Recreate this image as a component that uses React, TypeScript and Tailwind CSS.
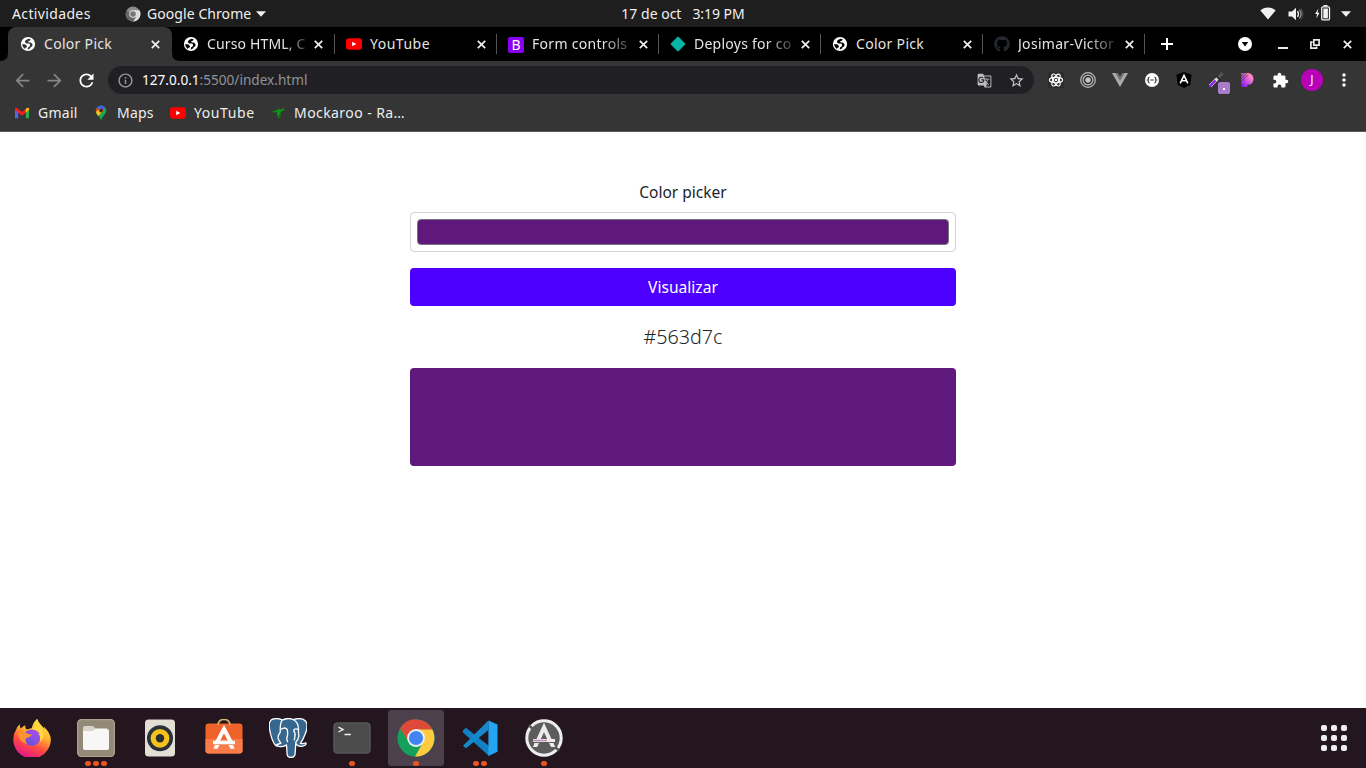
import React from "react";
import { FaGithub } from "react-icons/fa";
import { MdExtension, MdGTranslate, MdStarBorder, MdInfoOutline, MdArrowBack, MdArrowForward, MdRefresh, MdMoreVert } from "react-icons/md";

type Box = { children: React.ReactNode; className?: string };

const GlobeIcon = ({ land = "fill-black" }: { land?: string }) => (
  <svg viewBox="0 0 16 16" className="size-4 shrink-0">
    <circle cx="8" cy="8" r="7.1" fill="#fff" />
    <path d="M8.4 2.7 5.6 4.3 4.8 6.2 6.4 7.6H9.2L10.2 8.8 9.6 10.4 8.2 11.2 7.6 13.4 9.4 13.1 10.4 11.6 12.2 10.2 12.6 8.4 11.2 6.8 8.4 6.2 8.2 5.2 10.2 4.6 10.6 3.2z" className={land} />
    <path d="M2.3 8 5.6 8.6 7 10.2 6.6 11.6 5.4 11.8 5 13 3.4 11.6 2.4 9.8z" className={land} />
  </svg>
);
const YouTubeIcon = () => (
  <svg viewBox="0 0 16 16" className="size-4 shrink-0">
    <rect x="0" y="2.2" width="16" height="11.6" rx="3" fill="#f00" />
    <path d="M6.2 5.7v4.6L10.3 8z" fill="#fff" />
  </svg>
);
const BootstrapIcon = () => (
  <span className="mt-px flex size-4 shrink-0 items-center justify-center rounded-xs bg-[#8a00f5] text-[14px] leading-4 text-white">B</span>
);
const DiamondIcon = () => (
  <svg viewBox="0 0 16 16" className="size-4 shrink-0"><path d="M8 .2 15.6 8 8 15.8.4 8z" fill="#05b5a5" /></svg>
);
const CloseIcon = ({ className = "size-[9px]" }: { className?: string }) => (
  <svg viewBox="0 0 9 9" className={className}><path d="M.8.8 8.2 8.2M8.2.8.8 8.2" stroke="#f1f1f1" strokeWidth="1.7" /></svg>
);

type TabInfo = { icon: React.ReactNode; title: string; box: string; text: string };
const tabs: TabInfo[] = [
  { icon: <GlobeIcon />, title: "Curso HTML, C", box: "w-[163px] -ml-px border-transparent", text: "tracking-[0.15px] [mask-image:linear-gradient(to_right,black_78%,transparent_108%)]" },
  { icon: <YouTubeIcon />, title: "YouTube", box: "w-[162px] border-[#555]", text: "tracking-[0.5px]" },
  { icon: <BootstrapIcon />, title: "Form controls", box: "w-[162px] border-[#555]", text: "tracking-[0.3px] [mask-image:linear-gradient(to_right,black_72%,transparent_108%)]" },
  { icon: <DiamondIcon />, title: "Deploys for co", box: "w-[162px] border-[#555]", text: "tracking-[0.25px] [mask-image:linear-gradient(to_right,black_74%,transparent_108%)]" },
  { icon: <GlobeIcon />, title: "Color Pick", box: "w-[162px] border-[#555]", text: "tracking-[0.3px]" },
  { icon: <FaGithub className="size-4 shrink-0 text-[#24292f]" />, title: "Josimar-Victor", box: "w-[163px] border-x border-[#555]", text: "tracking-[0.3px] [mask-image:linear-gradient(to_right,black_70%,transparent_106%)]" },
];

function Tab({ icon, title, box, text }: TabInfo) {
  return (
    <div className={`flex h-5 shrink-0 items-center border-l pl-[11px] ${box}`}>
      {icon}
      <span className={`mb-0.5 ml-2 w-[98px] shrink-0 whitespace-nowrap ${text}`}>{title}</span>
      <CloseIcon className="ml-[9px] size-[9px] shrink-0" />
    </div>
  );
}

function SystemBar() {
  return (
    <header className="grid h-[27px] grid-cols-[1fr_auto_1fr] items-center bg-[#1e1e1e] text-[14px] text-[#f0f0f0]">
      <div className="flex items-center pl-3">
        <span className="w-[114px] tracking-[0.36px]">Actividades</span>
        <svg viewBox="0 0 16 16" className="-ml-px mr-1.5 size-4">
          <circle cx="8" cy="8" r="7.4" fill="#8c8c8c" />
          <path d="M8 4.3h6.5A7.4 7.4 0 0 1 8 15.4l3.2-5.6z" fill="#ddd" />
          <path d="M1.6 4.3A7.4 7.4 0 0 0 8 15.4l2.8-4z" fill="#666" />
          <circle cx="8" cy="8" r="3.8" fill="#ddd" /><circle cx="8" cy="8" r="2.8" fill="#777" />
        </svg>
        <span className="w-[109px] whitespace-nowrap tracking-[0.07px]">Google Chrome</span>
        <svg viewBox="0 0 10 6" className="h-1.5 w-2.5"><path d="M0 .3h10L5 5.7z" fill="#f0f0f0" /></svg>
      </div>
      <div className="flex gap-[11px] whitespace-pre text-[14px]"><span>17 de oct</span><span className="-tracking-[0.05px]">3:19 PM</span></div>
      <div className="flex items-center justify-end pr-[15px]">
        <svg viewBox="0 0 16 13" className="mr-3 h-[13px] w-4"><path d="M.4 3.4C4-.5 12-.5 15.6 3.4L8 12.6z" fill="#f1f1f1" /></svg>
        <svg viewBox="0 0 16 14" className="mr-[11px] h-3.5 w-4" fill="none">
          <path d="M.5 4.5H4L8 .8v12.4L4 9.5H.5z" fill="#f1f1f1" />
          <path d="M9.5 4.2q2 2.8 0 5.6" stroke="#f1f1f1" strokeWidth="1.3" /><path d="M11.4 2.7q3.4 4.3 0 8.6" stroke="#999" strokeWidth="1.3" /><path d="M13 1.5q4 5.5 0 11" stroke="#555" />
        </svg>
        <svg viewBox="0 0 16 16" className="mb-px mr-2.5 size-4">
          <path d="M3.5 3.5 0 9h2l-.6 4.5L4.5 7.8h-2z" fill="#f1f1f1" />
          <path d="M8.5 0h4v1.5h-4z" fill="#f1f1f1" /><rect x="6.7" y="1.9" width="7.8" height="13" rx="1.2" fill="none" stroke="#f1f1f1" strokeWidth="1.3" /><path d="M8.3 3.5h4.6v9.8H8.3z" fill="#f1f1f1" />
        </svg>
        <svg viewBox="0 0 10 6" className="h-1.5 w-2.5"><path d="M0 .3h10L5 5.7z" fill="#f0f0f0" /></svg>
      </div>
    </header>
  );
}

function TabStrip() {
  return (
    <div className="flex h-[34px] items-center bg-black text-[14px] text-[#e4e4e4]">
      <svg viewBox="0 0 8 8" className="size-2 shrink-0 self-end"><path d="M8 0v8H0q8 0 8-8" fill="#353535" /></svg>
      <div className="flex h-full w-[164px] shrink-0 items-center rounded-t-lg bg-[#353535] pl-3">
        <GlobeIcon land="fill-[#353535]" />
        <span className="mb-0.5 ml-2 w-[98px] tracking-[0.3px]">Color Pick</span>
        <CloseIcon className="ml-[9px] size-[9px]" />
      </div>
      <svg viewBox="0 0 8 8" className="-mr-2 size-2 shrink-0 self-end"><path d="M0 0v8h8Q0 8 0 0" fill="#353535" /></svg>
      {tabs.map((t, i) => <Tab key={i} {...t} />)}
      <svg viewBox="0 0 12 12" className="ml-4 size-3"><path d="M6 0v12M0 6h12" stroke="#fff" strokeWidth="2" /></svg>
      <div className="ml-auto flex items-center pr-[14px]">
        <svg viewBox="0 0 14 14" className="size-3.5"><circle cx="7" cy="7" r="7" fill="#fff" /><path d="M3.8 5h6.4L7 9.4z" fill="#000" /></svg>
        <svg viewBox="0 0 10 10" className="ml-[26px] size-2.5"><path d="M0 8h10" stroke="#e8e8e8" strokeWidth="2" transform="translate(0 1)" /></svg>
        <svg viewBox="0 0 10 10" className="ml-[22px] size-2.5" fill="none" stroke="#e8e8e8" strokeWidth="1.7"><path d="M3.8.9h5.3v5.2H3.8zM2.6 3.2H.9v5.9h5.7V7.6" /></svg>
        <CloseIcon className="ml-[23px] size-[9px]" />
      </div>
    </div>
  );
}

const Slot = ({ children, className = "" }: Box) => (
  <div className={`flex h-7 w-8 shrink-0 items-center justify-center ${className}`}>{children}</div>
);

function Toolbar() {
  return (
    <div className="flex h-[38px] items-center bg-[#353535] pl-1.5 text-[13.6px]">
      <Slot><MdArrowBack className="size-[21px] text-[#858585]" /></Slot>
      <Slot><MdArrowForward className="size-[21px] text-[#858585]" /></Slot>
      <Slot><MdRefresh className="size-[21px] text-white" /></Slot>
      <div className="ml-1.5 flex h-7 w-[926px] shrink-0 items-center rounded-full bg-[#202024] pl-[9px]">
        <MdInfoOutline className="mr-2 size-[17px] text-[#9a9a9d]" />
        <span className="text-white">127.0.0.1<span className="text-[#929297]">:5500/index.html</span></span>
        <div className="ml-auto flex pr-0.5"><Slot><MdGTranslate className="size-[15px] text-[#bdbdbd]" /></Slot><Slot><MdStarBorder className="size-[17px] text-[#c8c8c8]" /></Slot></div>
      </div>
      <div className="ml-1.5 flex">
        <Slot>
          <svg viewBox="0 0 16 16" className="size-4" fill="none" stroke="#fff" strokeWidth="1.15">
            <path d="M0 0h16v16H0z" fill="#2c2c2c" stroke="none" />
            <ellipse cx="8" cy="8" rx="6.6" ry="2.7" /><ellipse cx="8" cy="8" rx="6.6" ry="2.7" transform="rotate(60 8 8)" /><ellipse cx="8" cy="8" rx="6.6" ry="2.7" transform="rotate(120 8 8)" />
            <circle cx="8" cy="8" r="1.3" fill="#fff" stroke="none" />
          </svg>
        </Slot>
        <Slot><svg viewBox="0 0 16 16" className="size-4" fill="none" stroke="#b8b8b8" strokeWidth="1.2"><circle cx="8" cy="8" r="7.3" /><circle cx="8" cy="8" r="4.9" /><circle cx="8" cy="8" r="2.2" fill="#d0d0d0" /></svg></Slot>
        <Slot><svg viewBox="0 0 16 14" className="h-3.5 w-4"><path d="M0 0h16L8 14z" fill="#ababab" /><path d="M3.2 0h9.6L8 8.3z" fill="#777" /><path d="M5.7 0h4.6L8 4z" fill="#353535" /></svg></Slot>
        <Slot><svg viewBox="0 0 14 14" className="size-3.5"><circle cx="7" cy="7" r="7" fill="#fff" /><path d="M4.6 4.3q-1.4 0-1.2 1.4 0 1-.8 1.3.8.3.8 1.3-.2 1.4 1.2 1.4M9.4 4.3q1.4 0 1.2 1.4 0 1 .8 1.3-.8.3-.8 1.3.2 1.4-1.2 1.4M5.2 7h3.6" fill="none" stroke="#333" strokeWidth="1.1" /></svg></Slot>
        <Slot><svg viewBox="0 0 16 16" className="size-4"><path d="m8 0 7.5 2.7-1.2 10L8 16l-6.3-3.3-1.2-10z" fill="#000" /><path d="m4.2 11.3 3.8-8 3.8 8M5.6 8.8h4.8" fill="none" stroke="#fff" strokeWidth="1.6" /></svg></Slot>
        <Slot className="relative">
          <svg viewBox="0 0 16 16" className="size-4"><path d="m10.5 5.5 4-4.5" stroke="#555" strokeWidth="3" /><path d="m8 4.5 4 4" stroke="#222" strokeWidth="2" /><path d="m2 14 7.5-7.5" stroke="#ddd" strokeWidth="3.2" /><path d="m1.5 14.5 6-6" stroke="#8b20e8" strokeWidth="2.4" /></svg>
          <span className="absolute left-[18px] top-4 flex size-3 items-center justify-center rounded-[2px] bg-[#aa7bc9]"><span className="mt-0.5 size-0.5 bg-white" /></span>
        </Slot>
        <Slot><svg viewBox="0 0 16 16" className="size-4"><defs><linearGradient id="pp" x1="1" y1="0" x2="0" y2="1"><stop offset=".25" stopColor="#ff86c5" /><stop offset="1" stopColor="#7a08ff" /></linearGradient></defs><path d="M1.2 1h7.3a6 6 0 0 1 0 11.8H7.2V15h-6z" fill="url(#pp)" /><path d="m1 4 3-3M1 6.7 6.6 1M1.3 9.3 8 2.6" stroke="#353535" strokeWidth=".8" /></svg></Slot>
        <Slot><MdExtension className="size-[17px] text-white" /></Slot>
        <Slot><span className="flex size-[22px] items-center justify-center rounded-full bg-[#b800b8] text-[12px] leading-none text-white">J</span></Slot>
        <Slot><MdMoreVert className="size-5 text-white" /></Slot>
      </div>
    </div>
  );
}

function Bookmarks() {
  return (
    <nav className="flex h-[33px] items-center border-b border-[#5a5a5a] bg-[#353535] pb-[5px] pl-3.5 text-[14px] text-[#eeeeee]">
      <svg viewBox="0 0 16 12" className="mr-2 h-3 w-4"><path d="M1 2.4 4.2 5v6.3H1z" fill="#4f67f5" /><path d="M11.8 5 15 2.4v8.9h-3.2z" fill="#24ad4b" /><path d="M1 1.5Q1.7.2 3 1l5 3.9L13 1q1.4-.8 2 .5v1.6L8 8.7 1 3.1z" fill="#f02020" /><path d="M11.8 2 13 1q1.4-.8 2 .5v1.6l-3.2 2.5z" fill="#ffc20a" /></svg>
      <span className="w-[55px] tracking-[0.25px]">Gmail</span>
      <svg viewBox="0 0 16 16" className="mr-2 size-4"><path d="M8 .5a5.2 5.2 0 0 0-5.2 5.2C2.8 9.8 7 10.5 8 15.8c1-5.3 5.2-6 5.2-10.1A5.2 5.2 0 0 0 8 .5" fill="#18aa50" /><path d="M4 2.4A5.2 5.2 0 0 1 12.2 2.6L8 5.8z" fill="#405cf0" /><path d="M4 2.4Q2.5 4.3 3 6.8L6.5 5z" fill="#e63430" /><path d="m3 6.8 4.5-3.6L10 6.5 5 11Q3.4 9 3 6.8" fill="#fbc116" /><circle cx="8" cy="5.5" r="1.9" fill="#5a2020" /></svg>
      <span className="w-[53px] tracking-[0.2px]">Maps</span>
      <YouTubeIcon /><span className="ml-2 w-[76px] tracking-[0.58px]">YouTube</span>
      <svg viewBox="0 0 16 12" className="mr-2 h-3 w-4"><path d="M.8 4.8Q4.6 5 6.4 3 8.3 1.3 10.6 2.7L13 1.8l.4-1 .5 1.1 1.5 1.2-2.2.5-2.1 1.1-1 1.6 1.2 1.8-1.8-.4L9 9.4l1.7.6v.7L8 10.4 6.9 7.2 7.1 5Q4.7 6 .8 4.8" fill="#079612" /></svg>
      <span className="tracking-[0.43px]">Mockaroo - Ra…</span>
    </nav>
  );
}

function Content() {
  return (
    <main className="flex flex-1 flex-col items-center bg-white pt-12 text-[#212529]">
      <div className="flex w-[546px] flex-col text-center">
        <label htmlFor="color" className="mb-2 text-[15.5px] leading-6">Color picker</label>
        <div id="color" className="h-10 rounded border border-[#ced4da] p-1.5"><div className="h-[26px] rounded-[4px] border border-[#777] bg-[#5f187b]" /></div>
        <button className="mt-4 h-[38px] rounded bg-[#4d00ff] pt-0.5 text-[15.6px] text-white">Visualizar</button>
        <p className="mt-4 text-[19.7px] font-light leading-[30px]">#563d7c</p>
        <div className="mt-4 h-[98px] rounded bg-[#5f187b]" />
      </div>
    </main>
  );
}

const FirefoxIcon = () => (
  <svg viewBox="0 0 38 38" className="size-[38px]">
    <defs><linearGradient id="ff" x1=".8" y1="0" x2=".35" y2="1"><stop stopColor="#fff04a" /><stop offset=".38" stopColor="#ffb42e" /><stop offset=".68" stopColor="#ff4b42" /><stop offset="1" stopColor="#e5148b" /></linearGradient><linearGradient id="fp" x1="1" y1="0" x2="0" y2="1"><stop stopColor="#b54bea" /><stop offset="1" stopColor="#5855d8" /></linearGradient></defs>
    <path d="M3 11q.6-3 3.6-5.8.2 3 1.3 4.3Q10 7 12.3 6.2q-.5 3 1.5 4.4L19 9Q19.4 4 24.3-.3q.8 3.7 4.2 6.7Q31 8.6 31.5 10.5L31 7.8q7 6.8 6.8 13.4A18.7 18.7 0 0 1 .3 20Q.2 15 3 11" fill="url(#ff)" />
    <circle cx="19" cy="18.7" r="8.3" fill="url(#fp)" />
    <path d="M5 14.5q5-2.5 9.7.2 2.3.7 4.5.5-1.4 3-6 3.7-1.8 3 1.4 6.2-8.4-1-9.6-10.6" fill="#ff9330" />
    <path d="M18.5 10q7 .3 9.5 5.5l-2.5-.9q2.7 3.4 1.2 8.4 5-3 3.8-9L25 5z" fill="#ffd93e" />
  </svg>
);
const FilesIcon = () => (
  <svg viewBox="0 0 38 38" className="size-[38px]"><rect x=".6" y=".6" width="36.8" height="37" rx="4" fill="#928a77" stroke="#aaa28f" strokeWidth="1.2" /><path d="M6 11V9q0-2 2-2h7q2 0 3 2.3h12v5H6z" fill="#d9d4c9" /><path d="M6 12h9.5l3-2H30q2 0 2 2v17q0 2-2 2H8q-2 0-2-2z" fill="#f8f7f5" /></svg>
);
const MusicIcon = () => (
  <svg viewBox="0 0 38 38" className="size-[38px]"><rect x="4" y=".5" width="30" height="37" rx="3.5" fill="#e4dfd4" /><circle cx="19" cy="19.3" r="13" fill="#293038" /><circle cx="19" cy="19.3" r="9.4" fill="#f4c21a" /><circle cx="19" cy="19.3" r="4.2" fill="#292d30" /></svg>
);
const SoftwareIcon = () => (
  <svg viewBox="0 0 38 38" className="size-[38px]"><rect x=".5" y="4.5" width="37" height="30" rx="3" fill="#ef6229" /><path d="M.5 20h37v11.5q0 3-3 3h-31q-3 0-3-3z" fill="#f77c4a" /><path d="M13 6Q13.5.5 19 .5T25 6" fill="none" stroke="#e0b56e" strokeWidth="1.6" /><path d="m12.2 23 6.8-13 6.8 13" fill="none" stroke="#fff" strokeWidth="4" /><path d="M8 21.8h22v3.5H8zM10 26h4.5l-2 3.8H8.5zM23.5 26H28l1.5 3.8h-4z" fill="#fff" /></svg>
);
const PostgresIcon = () => (
  <svg viewBox="0 0 38 40" className="h-10 w-[38px]" fill="#35678f" stroke="#fff" strokeWidth="1.3" strokeLinejoin="round">
    <path d="M13.2 1.8Q6.6-.9 2.2 1.9-.6 4.8.6 11.5q1.8 10 5.3 15.2 2 2.8 4.4-.2l4-5z" />
    <path d="M24.2 1.6Q33-1 36.7 3.2q3 4.2-.5 12.8-2.2 5.8-4.8 9.4 2.7.6 5.6-.5.6 2.4-3.2 3.2-3.9.8-6.3-1.3l-3-5z" />
    <path d="M13.2 2.2Q19-1.1 25 2q5.2 3.2 4.4 11.8l.5 4.2q-.6 4-3 6l-.8 12.1q-.7 3.3-4.4 3.3-3.4 0-3.6-3.4l-.6-9.2q-2.7 2.7-7.8 1.5-2.9-1-1.8-1.8l4-1.1-1.7-2.8q-2.8-3.4 1.1-8.5-.5-8.9 1.9-11.9" />
    <path d="M12 11.5q4-3 6.2 0 1.2 3.7-.5 9.2l1 3.5M30 12q-3.8-2.5-5.4.4 2.3 3.5 1.2 6.6l-.6 3.5" fill="none" />
  </svg>
);
const TerminalIcon = () => (
  <svg viewBox="0 0 38 32" className="h-8 w-[38px]" fill="none">
    <rect x=".9" y=".9" width="36.2" height="30.2" rx="3" fill="#4b4b4b" stroke="#626262" />
    <path d="m5.5 5.2 4.6 2.4-4.6 2.4M11.5 12.5h6.3" stroke="#f2f2f2" strokeWidth="1.3" />
  </svg>
);
const ChromeIcon = () => (
  <svg viewBox="0 0 38 38" className="size-[38px]"><circle cx="19" cy="19" r="18.6" fill="#14a05b" /><path d="M3 9.4A18.6 18.6 0 0 1 35.5 10.5L19 11 12 23z" fill="#df4939" /><path d="M19 10.5h16.3A18.6 18.6 0 0 1 18 37.6l8.2-14.3z" fill="#ffcc40" /><circle cx="19" cy="19" r="8.9" fill="#f1f1f1" /><circle cx="19" cy="19" r="7.1" fill="#4384f3" /></svg>
);
const CodeIcon = () => (
  <svg viewBox="0 0 38 38" className="size-[38px]"><path d="m2 11.5 3-2.7 23 18.3V37L2.5 14q-1.2-1.4-.5-2.5" fill="#1380c4" /><path d="M2 26.7 27.4 1.5v9.6L5 29.2z" fill="#1689cd" /><path d="m27.4 1.5 9.1 4.1v27.2l-9.1 4.1z" fill="#25a5f1" /></svg>
);
const UpdaterIcon = () => (
  <svg viewBox="0 0 38 38" className="size-[38px]"><circle cx="19" cy="19" r="17.2" fill="#5c5c5c" stroke="#eeeeec" strokeWidth="3" /><path d="m4 6.5 4 3.5M30 28l4 3.5" stroke="#5c5c5c" strokeWidth="2.4" /><path d="m12.5 22.5 6.5-14 6.5 14" fill="none" stroke="#ecebe9" strokeWidth="4" /><path d="M8 20h22v3H8zM9.5 24H14l-1.8 4H8zM24 24h4.5l1.6 4h-4z" fill="#eee" /><path d="M8 21.5h14" stroke="#bd87b6" strokeWidth="1.5" /></svg>
);

const dock: { icon: React.ReactNode; dots: number; active?: boolean }[] = [
  { icon: <FirefoxIcon />, dots: 0 }, { icon: <FilesIcon />, dots: 3 }, { icon: <MusicIcon />, dots: 0 },
  { icon: <SoftwareIcon />, dots: 0 }, { icon: <PostgresIcon />, dots: 0 }, { icon: <TerminalIcon />, dots: 1 },
  { icon: <ChromeIcon />, dots: 1, active: true }, { icon: <CodeIcon />, dots: 2 }, { icon: <UpdaterIcon />, dots: 1 },
];

function Dock() {
  return (
    <footer className="flex h-[60px] shrink-0 items-center gap-2 bg-[#23161f] px-1">
      {dock.map((d, i) => (
        <div key={i} className={`relative flex size-14 items-center justify-center rounded-[3px] ${d.active ? "bg-[#4b404b]" : ""}`}>
          {d.icon}
          <div className="absolute bottom-0 left-0 flex w-full justify-center gap-[2.3px]">
            {Array.from({ length: d.dots }, (_, n) => <span key={n} className="size-[5.5px] rounded-full bg-[#e95420]" />)}
          </div>
        </div>
      ))}
      <div className="ml-auto mr-[15px] grid grid-cols-3 gap-1">
        {Array.from({ length: 9 }, (_, n) => <span key={n} className="size-1.5 rounded-[2px] bg-[#f0eff0]" />)}
      </div>
    </footer>
  );
}

export default function App() {
  return (
    <div className="flex h-screen w-screen flex-col overflow-hidden font-['Noto_Sans','Liberation_Sans',sans-serif]">
      <SystemBar />
      <TabStrip />
      <Toolbar />
      <Bookmarks />
      <Content />
      <Dock />
    </div>
  );
}
